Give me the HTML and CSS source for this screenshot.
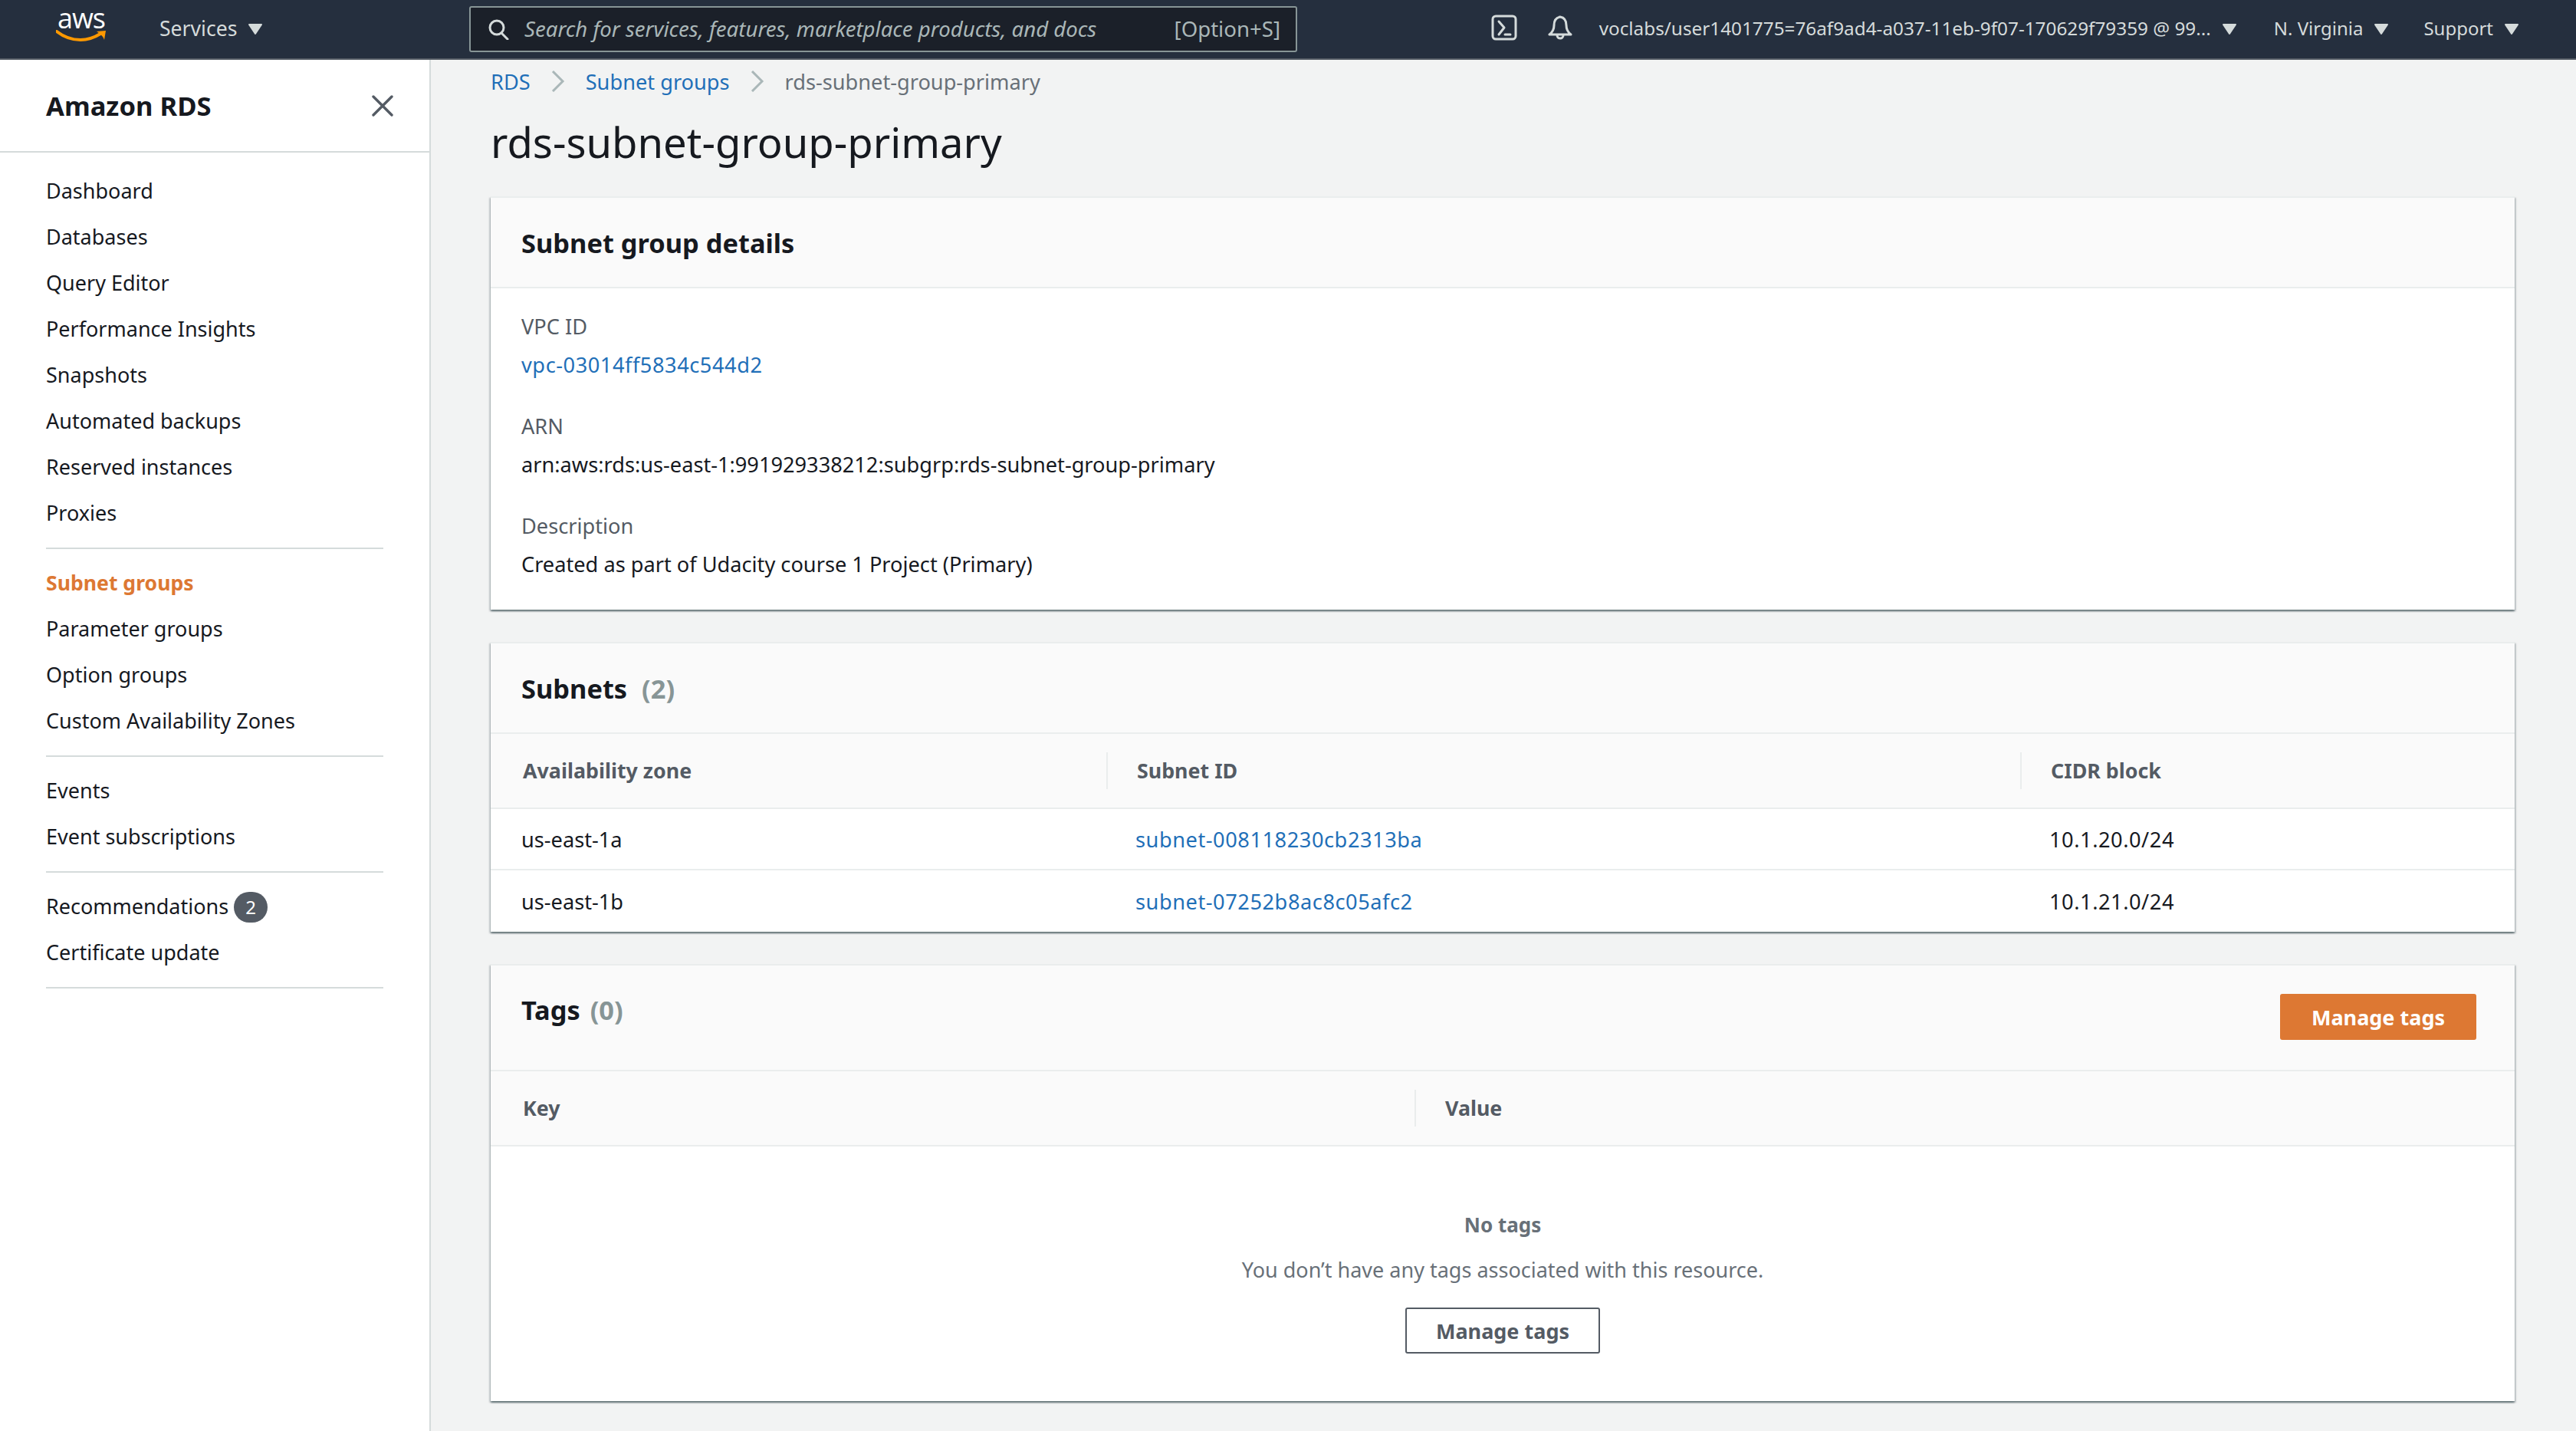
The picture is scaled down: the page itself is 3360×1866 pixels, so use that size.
FILE: index.html
```html
<!DOCTYPE html>
<html lang="en">
<head>
  <meta charset="UTF-8">
  <title>rds-subnet-group-primary</title>
  <link rel="stylesheet" href="styles.css">
</head>
<body>
  <header class="topbar">
    <div class="top-left">
      <div class="logo">
        <span class="logo-text">aws</span>
        <svg class="logo-smile" width="66" height="16" viewBox="0 0 66 16"><path d="M1 2c9 7 20 11 31 11 9 0 18-3 26-8" fill="none" stroke="#f90" stroke-width="4" stroke-linecap="round"/><path d="M53 2l12-1-2 12c-1-4-5-8-10-11z" fill="#f90"/></svg>
      </div>
      <span class="top-item services">Services <svg class="caret" width="20" height="16" viewBox="0 0 20 16"><polygon points="2,2 18,2 10,14"/></svg></span>
    </div>
    <div class="search">
      <svg width="28" height="28" viewBox="0 0 28 28" fill="none" stroke="#d5dbdb" stroke-width="3"><circle cx="12" cy="12" r="9"/><path d="M18 19l8 8" stroke-linecap="round"/></svg>
      <span class="search-text">Search for services, features, marketplace products, and docs</span>
      <span class="search-hint">[Option+S]</span>
    </div>
    <div class="top-right">
      <svg class="top-icon" width="34" height="34" viewBox="0 0 34 34" fill="none" stroke="#d5dbdb" stroke-width="3"><rect x="2" y="2" width="30" height="30" rx="4"/><path d="M10 9l7 8-7 9M18 26h7" stroke-linecap="round" stroke-linejoin="round"/></svg>
      <svg class="top-icon" width="34" height="34" viewBox="0 0 34 34" fill="none" stroke="#d5dbdb" stroke-width="3" stroke-linejoin="round"><path d="M17 3c-6 1-8 6-8 11 0 6-2 9-6 12h28c-4-3-6-6-6-12 0-5-2-10-8-11z"/><path d="M13 27a4 4 0 0 0 8 0"/></svg>
      <span class="top-item user">voclabs/user1401775=76af9ad4-a037-11eb-9f07-170629f79359 @ 99... <svg class="caret" width="20" height="16" viewBox="0 0 20 16"><polygon points="2,2 18,2 10,14"/></svg></span>
      <span class="top-item region">N. Virginia <svg class="caret" width="20" height="16" viewBox="0 0 20 16"><polygon points="2,2 18,2 10,14"/></svg></span>
      <span class="top-item support">Support <svg class="caret" width="20" height="16" viewBox="0 0 20 16"><polygon points="2,2 18,2 10,14"/></svg></span>
    </div>
  </header>

  <div class="layout">
    <aside class="sidebar">
      <div class="side-head">
        <span class="side-title">Amazon RDS</span>
        <svg width="28" height="28" viewBox="0 0 28 28" stroke="#545b64" stroke-width="3.4" stroke-linecap="round"><path d="M2 2l24 24M26 2L2 26"/></svg>
      </div>
      <ul class="nav">
        <li>Dashboard</li>
        <li>Databases</li>
        <li>Query Editor</li>
        <li>Performance Insights</li>
        <li>Snapshots</li>
        <li>Automated backups</li>
        <li>Reserved instances</li>
        <li>Proxies</li>
      </ul>
      <ul class="nav">
        <li class="active">Subnet groups</li>
        <li>Parameter groups</li>
        <li>Option groups</li>
        <li>Custom Availability Zones</li>
      </ul>
      <ul class="nav">
        <li>Events</li>
        <li>Event subscriptions</li>
      </ul>
      <ul class="nav">
        <li>Recommendations <span class="badge">2</span></li>
        <li>Certificate update</li>
      </ul>
    </aside>

    <main class="content">
      <nav class="crumbs">
        <a href="#">RDS</a>
        <svg width="18" height="28" viewBox="0 0 18 28" fill="none" stroke="#aab7b8" stroke-width="3"><path d="M2 1l13 13L2 27"/></svg>
        <a href="#">Subnet groups</a>
        <svg width="18" height="28" viewBox="0 0 18 28" fill="none" stroke="#aab7b8" stroke-width="3"><path d="M2 1l13 13L2 27"/></svg>
        <span>rds-subnet-group-primary</span>
      </nav>
      <h1 class="page-title">rds-subnet-group-primary</h1>

      <section class="card">
        <div class="card-head"><h2>Subnet group details</h2></div>
        <div class="details">
          <div class="detail"><div class="label">VPC ID</div><div><a class="num" href="#">vpc-03014ff5834c544d2</a></div></div>
          <div class="detail"><div class="label">ARN</div><div>arn:aws:rds:us-east-1:991929338212:subgrp:rds-subnet-group-primary</div></div>
          <div class="detail"><div class="label">Description</div><div>Created as part of Udacity course 1 Project (Primary)</div></div>
        </div>
      </section>

      <section class="card">
        <div class="card-head"><h2>Subnets <span class="count subnets-count">(2)</span></h2></div>
        <div class="row row-head subnet-cols">
          <div class="th">Availability zone</div>
          <div class="th">Subnet ID</div>
          <div class="th">CIDR block</div>
        </div>
        <div class="row subnet-cols">
          <div class="td">us-east-1a</div>
          <div class="td"><a class="num" href="#">subnet-008118230cb2313ba</a></div>
          <div class="td num">10.1.20.0/24</div>
        </div>
        <div class="row subnet-cols">
          <div class="td">us-east-1b</div>
          <div class="td"><a class="num" href="#">subnet-07252b8ac8c05afc2</a></div>
          <div class="td num">10.1.21.0/24</div>
        </div>
      </section>

      <section class="card">
        <div class="card-head tags-head">
          <h2>Tags <span class="count">(0)</span></h2>
          <button class="btn btn-primary">Manage tags</button>
        </div>
        <div class="row row-head tag-cols">
          <div class="th">Key</div>
          <div class="th">Value</div>
        </div>
        <div class="empty">
          <div class="empty-title">No tags</div>
          <div class="empty-text">You don’t have any tags associated with this resource.</div>
          <button class="btn btn-plain">Manage tags</button>
        </div>
      </section>
    </main>
  </div>
</body>
</html>
```

FILE: styles.css
```css
* {
  box-sizing: border-box;
}
body {
  margin: 0;
  height: 1866px;
  overflow: hidden;
  background-color: #f2f3f3;
  color: #16191f;
  font-family: "Noto Sans", sans-serif;
  font-size: 27.2px;
}
a {
  color: #1f6fb8;
  text-decoration: none;
}
.num {
  letter-spacing: 0.55px;
}

/* top bar */
.topbar {
  display: flex;
  align-items: center;
  height: 78px;
  background-color: #252f3e;
  border-bottom: 2px solid #545b64;
  color: #d5dbdb;
}
.top-left {
  display: flex;
  align-items: center;
  width: 612px;
  padding-left: 73px;
}
.logo {
  display: flex;
  flex-direction: column;
  align-items: center;
  width: 66px;
  height: 44px;
  margin-top: -4px;
}
.logo-text {
  height: 25px;
  color: #fff;
  font-family: "Open Sans", sans-serif;
  font-size: 36px;
  line-height: 20px;
  letter-spacing: -1px;
}
.logo-smile {
  flex: none;
}
.top-item {
  display: inline-flex;
  align-items: center;
  gap: 14px;
  padding-bottom: 3px;
  white-space: nowrap;
  font-size: 24px;
}
.services {
  margin-left: 69px;
  font-size: 26.6px;
}
.user {
  margin-left: 34px;
  font-size: 24.3px;
}
.caret {
  margin-top: 2px;
  fill: #d5dbdb;
  stroke: #d5dbdb;
  stroke-width: 2;
  stroke-linejoin: round;
}
.search {
  display: flex;
  align-items: center;
  width: 1080px;
  height: 60px;
  padding: 0 20px 0 22px;
  background-color: #1b2029;
  border: 2px solid #879596;
  border-radius: 3px;
  color: #aab7b8;
  font-size: 27.6px;
}
.search-text {
  margin-left: 20px;
  padding-bottom: 2px;
  font-style: italic;
}
.search-hint {
  margin-left: auto;
  padding-bottom: 2px;
}
.top-right {
  display: flex;
  align-items: center;
  margin-left: auto;
  padding-right: 74px;
}
.top-icon {
  margin-bottom: 4px;
}
.top-icon + .top-icon {
  margin-left: 39px;
}
.region {
  margin-left: 48px;
}
.support {
  margin-left: 45px;
}

/* sidebar */
.layout {
  display: flex;
  height: 1788px;
}
.sidebar {
  flex: none;
  width: 562px;
  background-color: #fff;
  border-right: 2px solid #d5dbdb;
}
.side-head {
  display: flex;
  align-items: center;
  justify-content: space-between;
  height: 121px;
  padding: 0 47px 0 60px;
  border-bottom: 2px solid #d5dbdb;
}
.side-title {
  font-size: 34.6px;
  font-weight: 700;
}
.nav {
  margin: 0 60px;
  padding: 0 0 15px;
  list-style: none;
  font-size: 27px;
  border-bottom: 2px solid #d5dbdb;
}
.side-head + .nav {
  padding-top: 20px;
}
.nav + .nav {
  padding-top: 14px;
}
.nav li {
  height: 60px;
  line-height: 60px;
  white-space: nowrap;
}
.nav .active {
  color: #dd7833;
  font-size: 26.6px;
  font-weight: 700;
}
.badge {
  display: inline-block;
  width: 44px;
  height: 40px;
  background-color: #545b64;
  border-radius: 20px;
  color: #fff;
  font-size: 24px;
  line-height: 40px;
  text-align: center;
}

/* main */
.content {
  flex: 1;
  padding: 0 80px 0 78px;
}
.crumbs {
  display: flex;
  align-items: center;
  gap: 27px;
  height: 56px;
  color: #687078;
}
.page-title {
  margin: 0 0 38px;
  padding-top: 18px;
  font-size: 54.4px;
  font-weight: 400;
  line-height: 66px;
}
.card {
  margin-bottom: 42px;
  background-color: #fff;
  border-top: 2px solid #eaeded;
  box-shadow: 0 2px 2px 0 rgba(0, 28, 36, 0.45), 2px 2px 2px 0 rgba(0, 28, 36, 0.15), -2px 2px 2px 0 rgba(0, 28, 36, 0.15);
}
.card-head {
  display: flex;
  align-items: center;
  height: 118px;
  padding: 0 40px;
  background-color: #fafafa;
  border-bottom: 2px solid #eaeded;
}
.card-head h2 {
  margin: 0;
  font-size: 34.4px;
  font-weight: 700;
}
.count {
  margin-left: 4px;
  color: #879596;
}
.subnets-count {
  margin-left: 10px;
}
.details {
  height: 419px;
  padding: 25px 40px 0;
}
.detail {
  margin-bottom: 30px;
  line-height: 50px;
}
.label {
  color: #545b64;
}

/* tables */
.row {
  display: grid;
  align-items: center;
  height: 80px;
  border-bottom: 2px solid #eaeded;
}
.row:last-child {
  border-bottom: none;
}
.row-head {
  height: 98px;
  background-color: #fafafa;
}
.subnet-cols {
  grid-template-columns: 803px 1192px 1fr;
}
.tag-cols {
  grid-template-columns: 1205px 1fr;
}
.td {
  padding-left: 40px;
}
.td + .td {
  padding-left: 38px;
}
.th {
  height: 48px;
  padding-left: 42px;
  color: #545b64;
  font-size: 26.8px;
  font-weight: 700;
  line-height: 48px;
}
.th + .th {
  padding-left: 38px;
  border-left: 2px solid #eaeded;
}

/* tags */
.tags-head {
  align-items: flex-start;
  justify-content: space-between;
  height: 138px;
  padding-top: 37px;
  padding-right: 50px;
}
.tags-head h2 {
  margin-top: -3px;
}
.btn {
  height: 60px;
  font-family: inherit;
  font-size: 27px;
  font-weight: 700;
  border-radius: 3px;
}
.btn-primary {
  width: 256px;
  background-color: #dd7833;
  border: none;
  color: #fff;
}
.btn-plain {
  width: 254px;
  margin-top: 32px;
  background-color: #fff;
  border: 2px solid #545b64;
  color: #545b64;
}
.empty {
  display: flex;
  flex-direction: column;
  align-items: center;
  height: 332px;
  padding-top: 85px;
  color: #687078;
  font-size: 27px;
  line-height: 34px;
}
.empty-title {
  margin-bottom: 25px;
  font-size: 26px;
  font-weight: 700;
}
```
